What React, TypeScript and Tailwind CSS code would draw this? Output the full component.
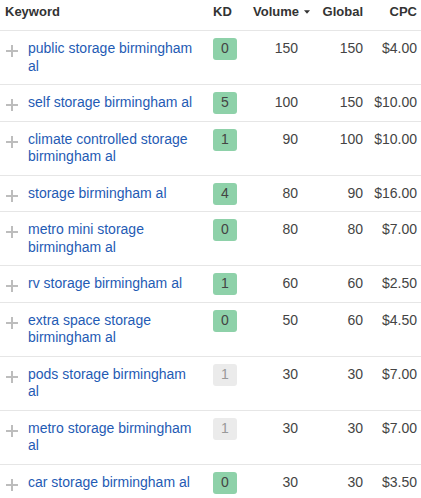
const rows = [
  { kw: "public storage birmingham al", kd: 0, volume: 150, global: 150, cpc: "$4.00" },
  { kw: "self storage birmingham al", kd: 5, volume: 100, global: 150, cpc: "$10.00" },
  { kw: "climate controlled storage birmingham al", kd: 1, volume: 90, global: 100, cpc: "$10.00" },
  { kw: "storage birmingham al", kd: 4, volume: 80, global: 90, cpc: "$16.00" },
  { kw: "metro mini storage birmingham al", kd: 0, volume: 80, global: 80, cpc: "$7.00" },
  { kw: "rv storage birmingham al", kd: 1, volume: 60, global: 60, cpc: "$2.50" },
  { kw: "extra space storage birmingham al", kd: 0, volume: 50, global: 60, cpc: "$4.50" },
  { kw: "pods storage birmingham al", kd: 1, volume: 30, global: 30, cpc: "$7.00", muted: true },
  { kw: "metro storage birmingham al", kd: 1, volume: 30, global: 30, cpc: "$7.00", muted: true },
  { kw: "car storage birmingham al", kd: 0, volume: 30, global: 30, cpc: "$3.50" },
];

function Plus() {
  return (
    <svg width="12" height="12" viewBox="0 0 12 12" className="block">
      <path d="M6 0v12M0 6h12" stroke="#bdbdbd" strokeWidth="2" />
    </svg>
  );
}

export default function App() {
  return (
    <div
      className="w-[421px] bg-white text-[#333]"
      style={{ fontFamily: '"Liberation Sans", Arial, sans-serif' }}
    >
      {/* header */}
      <div className="grid grid-cols-[213px_40px_57px_53px_54px] pr-[4px] pt-[3px] pb-[9px] border-b border-[#e6e6e6] text-[13px] font-bold leading-[18px] text-[#333]">
        <div className="pl-[5px]">Keyword</div>
        <div>KD</div>
        <div className="flex items-center justify-end gap-[5px]">
          <span>Volume</span>
          <svg width="7" height="4" viewBox="0 0 7 4" className="block">
            <path d="M0 0h7L3.5 4z" fill="#333" />
          </svg>
        </div>
        <div className="text-right">Global</div>
        <div className="text-right">CPC</div>
      </div>

      {/* rows */}
      {rows.map((r) => (
        <div
          key={r.kw}
          className="grid grid-cols-[28px_185px_40px_57px_53px_54px] pr-[4px] border-b border-[#e6e6e6] text-[14px] leading-[17.5px]"
        >
          <div className="pl-[6px] pt-[14px]">
            <Plus />
          </div>
          <div className="py-[9px]">
            <a href="#" className="block w-[168px] text-[#1f5bb4] no-underline">
              {r.kw}
            </a>
          </div>
          <div className="pt-[7px]">
            <span
              className={
                r.muted
                  ? "flex h-[22px] w-[24px] items-center justify-center rounded-[3px] bg-[#ebebeb] text-[#999]"
                  : "flex h-[22px] w-[24px] items-center justify-center rounded-[3px] bg-[#8ed1a9] text-[#444]"
              }
            >
              {r.kd}
            </span>
          </div>
          <div className="py-[9px] pr-[12px] text-right text-[#444]">{r.volume}</div>
          <div className="py-[9px] text-right text-[#444]">{r.global}</div>
          <div className="py-[9px] text-right text-[#444]">{r.cpc}</div>
        </div>
      ))}
    </div>
  );
}
